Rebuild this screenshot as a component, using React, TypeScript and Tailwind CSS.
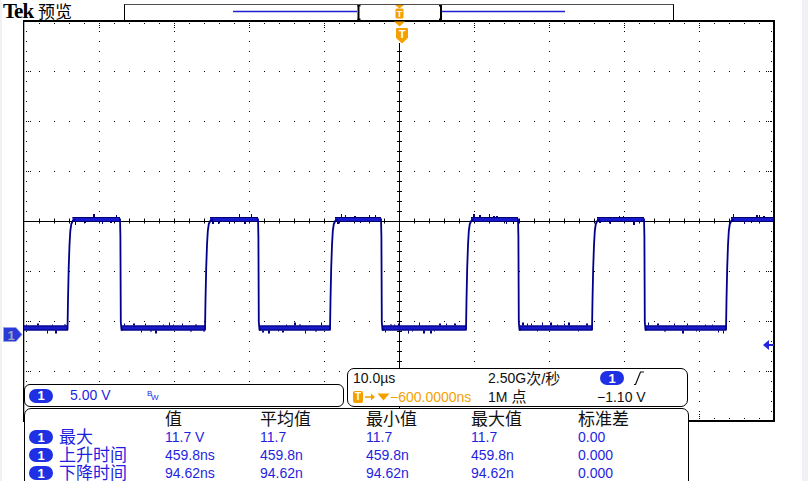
import React from 'react';

// graticule geometry, in page pixels (the svg viewBox maps 1:1 onto the page)
const GX0 = 24;
const GX1 = 774;
const GY0 = 21;
const GY1 = 421;
const CX = 399;
const CY = 221;

const LOW = 328;
const HIGH = 219.5;
const PULSES: [number, number][] = [
  [67.5, 120],
  [205, 258],
  [330, 381],
  [466, 518],
  [592, 644],
  [726, 9999],
];

const ORANGE = '#f5a000';

function rng(seed: number) {
  let s = seed;
  return () => {
    s = (s * 1103515245 + 12345) % 2147483648;
    return s / 2147483648;
  };
}

function dotPath() {
  let d = '';
  const dot = (x: number, y: number) => {
    d += `M${x} ${y}h1v1h-1z`;
  };
  // vertical dotted lines
  for (let k = 1; k < 10; k++) {
    if (k === 5) continue;
    const x = GX0 + 75 * k;
    for (let y = GY0 + 10; y < GY1 - 5; y += 10) dot(x, y);
    [2, 4, 6].forEach((o) => {
      dot(x, GY0 + o);
      dot(x, GY1 - o - 1);
    });
  }
  // horizontal dotted lines
  for (let k = 1; k < 8; k++) {
    if (k === 4) continue;
    const y = GY0 + 50 * k;
    for (let x = GX0 + 15; x < GX1 - 5; x += 15) dot(x, y);
    [2, 4, 6].forEach((o) => {
      dot(GX0 + o, y);
      dot(GX1 - o - 2, y);
    });
  }
  // edge ticks
  for (let x = GX0 + 15; x < GX1 - 5; x += 15) {
    dot(x, GY0 + 2);
    dot(x, GY1 - 3);
  }
  for (let y = GY0 + 10; y < GY1 - 5; y += 10) {
    dot(GX0 + 2, y);
    dot(GX1 - 3, y);
  }
  return d;
}

function centerTicks() {
  let d = '';
  for (let y = GY0 + 30; y < GY1; y += 10) d += `M${CX - 2} ${y + 0.5}h5`;
  for (let x = GX0 + 15; x < GX1; x += 15) d += `M${x + 0.5} ${CY - 2.5}v5`;
  return d;
}

function Trace() {
  const bands: { x0: number; x1: number; y: number }[] = [];
  let prev = GX0;
  let edges = '';
  for (const [r, f] of PULSES) {
    bands.push({ x0: prev, x1: r + 0.5, y: LOW });
    bands.push({ x0: r + 5, x1: Math.min(f, GX1 - 1), y: HIGH });
    prev = f + 1.5;
    edges += `M${r} ${LOW + 2} L${r + 0.5} 300 L${r + 1.2} 268 L${r + 2} 245 L${r + 2.8} 231 L${r + 3.8} 224 L${r + 5.5} 220.5 L${r + 8} ${HIGH}`;
    if (f < GX1) {
      edges += `M${f} ${HIGH - 1} L${f + 0.4} 236 L${f + 0.8} 322 L${f + 1.5} ${LOW + 2} L${f + 3} ${LOW + 1}`;
    }
  }

  const rand = rng(7);
  const noise: React.ReactNode[] = [];
  bands.forEach((b, i) => {
    let x = b.x0 + 2;
    while (x < b.x1 - 2) {
      const up = rand() > 0.5;
      const h = 1 + Math.floor(rand() * 3);
      noise.push(
        <rect
          key={`${i}-${x}`}
          x={Math.round(x)}
          y={up ? b.y - 2.5 - h : b.y + 2.5}
          width={rand() > 0.6 ? 2 : 1}
          height={h}
        />
      );
      x += 3 + rand() * 8;
    }
  });

  return (
    <g>
      {bands.map((b, i) => (
        <g key={i}>
          <rect x={b.x0} y={b.y - 2.5} width={b.x1 - b.x0} height={5} fill="#1818cc" />
          <rect x={b.x0} y={b.y - 2.5} width={b.x1 - b.x0} height={1} fill="#00006e" />
          <rect x={b.x0} y={b.y + 1.5} width={b.x1 - b.x0} height={1} fill="#00006e" />
        </g>
      ))}
      <g fill="#00007a">{noise}</g>
      <path d={edges} fill="none" stroke="#00008a" strokeWidth={1.8} strokeLinejoin="round" />
    </g>
  );
}

const Pill = () => (
  <span className="flex h-[14px] w-[24px] shrink-0 items-center justify-center rounded-full bg-[#1f2fe4] text-[13px] font-bold leading-none text-white">
    1
  </span>
);

const RecordBar = () => (
  <div className="ml-[2px] mt-[4px] h-[16px] w-[550px] shrink-0 border-x border-t border-x-black border-t-[#505050] bg-white">
    <svg width={548} height={15} viewBox="125 5 548 15" className="block">
      <path d="M233 11.5H357M442 11.5H565" stroke="#1e1ed2" strokeWidth={1.4} />
      <g fill="#000">
        <rect x={357.5} y={5} width={2} height={15} />
        <rect x={357.5} y={5} width={3} height={1.5} />
        <rect x={357.5} y={18.5} width={3} height={1.5} />
        <rect x={440} y={5} width={2} height={15} />
        <rect x={439} y={5} width={3} height={1.5} />
        <rect x={439} y={18.5} width={3} height={1.5} />
      </g>
      <path d="M395 5h9l-4.5 3.5z" fill={ORANGE} />
      <rect x={395.5} y={8.5} width={8} height={10} rx={1.5} fill={ORANGE} />
      <text x={399.5} y={17} fontSize={9} fontWeight="bold" fill="#fff" textAnchor="middle" fontFamily="Liberation Sans">
        T
      </text>
    </svg>
  </div>
);

const Graticule = () => (
  <svg width={756} height={404} viewBox="22 19 756 404" className="ml-[20px] block">
    <path d={dotPath()} fill="#000" />
    <path d={`M${GX0} ${CY + 0.5}H${GX1}M${CX + 0.5} 43V${GY1}`} stroke="#000" strokeWidth={1} />
    <path d={centerTicks()} stroke="#000" strokeWidth={1} />
    <g fill="#000">
      <rect x={23} y={20} width={752} height={2} />
      <rect x={23} y={420} width={752} height={2} />
      <rect x={23} y={20} width={1.3} height={402} />
      <rect x={773} y={20} width={2} height={402} />
    </g>
    <Trace />
    <path d="M394 21.5h11l-5.5 5z" fill={ORANGE} />
    <path d="M396.5 28.5h11v9.5l-5.5 5l-5.5-5z" fill={ORANGE} stroke={ORANGE} strokeLinejoin="round" />
    <text x={402} y={38} fontSize={11} fontWeight="bold" fill="#fff" textAnchor="middle" fontFamily="Liberation Sans">
      T
    </text>
    <path d="M763 345l6-5v10z" fill="#2424e0" />
    <rect x={768} y={344} width={6} height={2} fill="#2424e0" />
  </svg>
);

const measurements = [
  ['最大', '11.7 V', '11.7', '11.7', '11.7', '0.00'],
  ['上升时间', '459.8ns', '459.8n', '459.8n', '459.8n', '0.000'],
  ['下降时间', '94.62ns', '94.62n', '94.62n', '94.62n', '0.000'],
];

const headers = ['', '值', '平均值', '最小值', '最大值', '标准差'];

export default function App() {
  return (
    <div className="h-[481px] w-[808px] overflow-hidden bg-[#f1f1f5] font-['Liberation_Sans','Noto_Sans_CJK_SC',sans-serif]">
      <div className="relative ml-[2px] h-[481px] w-[800px] bg-white">
        <header className="flex h-[19px] items-start">
          <div className="flex w-[120px] shrink-0 items-baseline pl-[1px] text-black">
            <span className="font-['Liberation_Serif',serif] text-[21px] font-bold leading-[23px] tracking-[-1px]">Tek</span>
            <span className="ml-[5px] text-[17px] leading-[23px]">预览</span>
          </div>
          <RecordBar />
        </header>

        <Graticule />

        {/* channel 1 ground marker */}
        <svg width={20} height={16} className="absolute left-[1px] top-[327px]">
          <path d="M0.5 0.5H13L19 7.5L13 14.5H0.5Z" fill="#2a3ad8" stroke="#9aa0e8" />
          <text x={8} y={12.5} fontSize={13} fontWeight="bold" fill="#a4a4b4" textAnchor="middle" fontFamily="Liberation Sans">
            1
          </text>
        </svg>

        {/* vertical panel */}
        <div className="absolute left-[22px] top-[384px] flex h-[23px] w-[320px] items-center rounded-[6px] border border-black bg-white pl-[4px] text-[14px] text-[#1f1fe0]">
          <Pill />
          <span className="ml-[17px] w-[77px]">5.00 V</span>
          <span className="relative -mt-[4px] text-[8px] leading-none">
            B<span className="absolute left-[4px] top-[4px] text-[8px]">W</span>
          </span>
        </div>

        {/* horizontal / trigger panel */}
        <div className="absolute left-[345px] top-[368px] grid h-[39px] w-[341px] grid-cols-[135px_109px_1fr] rounded-[7px] border border-black bg-white pl-[5px] text-[14px] leading-none text-[#111]">
          <div className="flex h-[18px] items-center">10.0µs</div>
          <div className="flex h-[18px] items-center">
            2.50G<span className="text-[15px]">次/秒</span>
          </div>
          <div className="flex h-[18px] items-center pl-[3px]">
            <Pill />
            <svg width={10} height={14} className="ml-[10px]">
              <path d="M0 13.5H1.5L6.5 1H10" fill="none" stroke="#111" strokeWidth={1.2} />
            </svg>
          </div>
          <div className="flex h-[18px] items-center text-[#f5a000]">
            <span className="flex h-[12px] w-[10px] items-center justify-center rounded-[2px] bg-[#f5a000] text-[10px] font-bold text-white">
              T
            </span>
            <svg width={12} height={10} className="ml-[1px]">
              <path d="M1 5H8" stroke="#f5a000" strokeWidth={1.6} />
              <path d="M7 1.5L11 5L7 8.5Z" fill="#f5a000" />
            </svg>
            <svg width={13} height={10} className="ml-[1px]">
              <path d="M0.5 1.5H12.5L6.5 8.5Z" fill="#f5a000" />
            </svg>
            <span>−600.0000ns</span>
          </div>
          <div className="flex h-[18px] items-center">
            1M<span className="ml-[4px] text-[15px]">点</span>
          </div>
          <div className="flex h-[18px] items-center">−1.10 V</div>
        </div>

        {/* measurement panel */}
        <div className="absolute left-[22px] top-[408px] h-[82px] w-[665px] rounded-t-[7px] border border-black bg-white pl-[4px] pt-[1px]">
          <div className="grid grid-cols-[136px_95px_106px_105px_107px_1fr]">
            {headers.map((h, i) => (
              <div key={i} className="flex h-[18px] items-center text-[17px] leading-none text-[#111]">
                {h}
              </div>
            ))}
            {measurements.map((row) =>
              row.map((cell, i) =>
                i === 0 ? (
                  <div key={`${row[0]}-l`} className="flex h-[18px] items-center">
                    <Pill />
                    <span className="ml-[6px] text-[17px] leading-none text-[#1f1fe0]">{cell}</span>
                  </div>
                ) : (
                  <div key={`${row[0]}-${i}`} className="flex h-[18px] items-center text-[14px] leading-none text-[#1f1fe0]">
                    {cell}
                  </div>
                )
              )
            )}
          </div>
        </div>
      </div>
    </div>
  );
}
